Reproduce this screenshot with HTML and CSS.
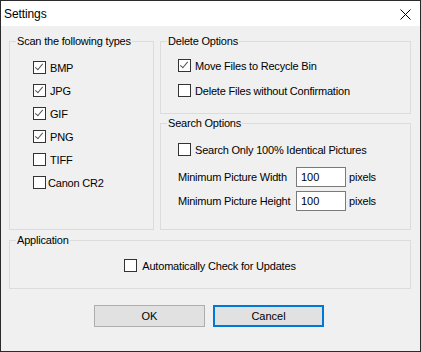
FILE: index.html
```html
<!DOCTYPE html>
<html>
<head>
<meta charset="utf-8">
<link rel="stylesheet" href="styles.css">
</head>
<body>
<div class="window">
  <div class="titlebar">
    <span class="title">Settings</span>
    <svg class="close" width="11" height="11" viewBox="0 0 11 11"><path d="M0.5 0.5 L10.5 10.5 M10.5 0.5 L0.5 10.5" stroke="#000" stroke-width="1" fill="none"/></svg>
  </div>
  <div class="content">
    <div class="top">
      <fieldset class="group types">
        <legend>Scan the following types</legend>
        <div class="inner">
          <div class="row"><span class="cb on"></span><span class="lbl">BMP</span></div>
          <div class="row"><span class="cb on"></span><span class="lbl">JPG</span></div>
          <div class="row"><span class="cb on"></span><span class="lbl">GIF</span></div>
          <div class="row"><span class="cb on"></span><span class="lbl">PNG</span></div>
          <div class="row"><span class="cb"></span><span class="lbl">TIFF</span></div>
          <div class="row tight"><span class="cb"></span><span class="lbl">Canon CR2</span></div>
        </div>
      </fieldset>
      <div class="rightcol">
        <fieldset class="group del">
          <legend>Delete Options</legend>
          <div class="inner">
            <div class="row r25"><span class="cb on"></span><span class="lbl">Move Files to Recycle Bin</span></div>
            <div class="row r25"><span class="cb"></span><span class="lbl">Delete Files without Confirmation</span></div>
          </div>
        </fieldset>
        <fieldset class="group search">
          <legend>Search Options</legend>
          <div class="inner">
            <div class="row"><span class="cb"></span><span class="lbl">Search Only 100% Identical Pictures</span></div>
            <div class="field first"><span class="flabel">Minimum Picture Width</span><span class="input">100</span><span class="unit">pixels</span></div>
            <div class="field"><span class="flabel">Minimum Picture Height</span><span class="input">100</span><span class="unit">pixels</span></div>
          </div>
        </fieldset>
      </div>
    </div>
    <fieldset class="group app">
      <legend>Application</legend>
      <div class="inner">
        <div class="row center"><span class="cb"></span><span class="lbl">Automatically Check for Updates</span></div>
      </div>
    </fieldset>
    <div class="buttons">
      <div class="btn">OK</div>
      <div class="btn default">Cancel</div>
    </div>
  </div>
</div>
</body>
</html>
```
FILE: styles.css
```css
html, body {
  margin: 0;
  padding: 0;
  background: #f0f0f0;
}
.window {
  width: 421px;
  height: 352px;
  box-sizing: border-box;
  border: 1px solid #2b2b2b;
  background: #f0f0f0;
  font-family: "Liberation Sans", Arial, sans-serif;
  font-size: 11px;
  color: #000;
  display: flex;
  flex-direction: column;
}
.titlebar {
  height: 25px;
  background: #fff;
  display: flex;
  align-items: center;
  justify-content: space-between;
  padding: 0 9px 0 3px;
  flex: none;
}
.title {
  font-size: 12px;
  letter-spacing: -0.1px;
}
.close {
  display: block;
  margin-top: 2px;
}
.content {
  padding: 9px 9px 0 8px;
  display: flex;
  flex-direction: column;
}
.top {
  display: flex;
  gap: 6px;
}
.group {
  margin: 0;
  padding: 0;
  border: 1px solid #dcdcdc;
  min-width: 0;
  box-sizing: border-box;
}
.group legend {
  padding: 0 1px;
  margin-left: 6px;
  line-height: 13px;
  letter-spacing: -0.2px;
  white-space: nowrap;
}
.types {
  width: 145px;
  height: 195px;
}
.types .inner {
  padding: 8px 0 0 23px;
}
.rightcol {
  width: 251px;
  display: flex;
  flex-direction: column;
  gap: 3px;
}
.del {
  height: 79px;
}
.del .inner {
  padding: 5px 0 0 17px;
}
.search {
  height: 113px;
}
.search .inner {
  padding: 8px 0 0 17px;
}
.row {
  height: 23px;
  display: flex;
  align-items: center;
  gap: 4px;
}
.row.r25 {
  height: 25px;
}
.row.tight {
  gap: 2px;
}
.lbl {
  letter-spacing: -0.2px;
  padding-top: 1px;
}
.cb {
  width: 13px;
  height: 13px;
  box-sizing: border-box;
  border: 1px solid #333;
  background: #fff;
  flex: none;
  position: relative;
}
.cb.on::after {
  content: "";
  position: absolute;
  left: 3px;
  top: 0px;
  width: 3px;
  height: 7px;
  border-right: 1.3px solid #555;
  border-bottom: 1.3px solid #555;
  transform: rotate(40deg);
}
.field {
  display: flex;
  align-items: center;
  height: 20px;
  margin-top: 4px;
}
.field.first {
  margin-top: 6px;
}
.flabel {
  width: 118px;
  letter-spacing: -0.2px;
}
.input {
  width: 50px;
  height: 20px;
  box-sizing: border-box;
  border: 1px solid #7a7a7a;
  background: #fff;
  padding: 3px 0 0 4px;
  line-height: 13px;
}
.unit {
  margin-left: 3px;
  letter-spacing: -0.2px;
}
.app {
  margin-top: 4px;
  height: 55px;
}
.app .inner {
  padding-top: 7px;
}
.row.center {
  justify-content: center;
  gap: 5px;
}
.buttons {
  display: flex;
  gap: 8px;
  margin-top: 16px;
  padding-left: 85px;
}
.btn {
  width: 111px;
  height: 22px;
  box-sizing: border-box;
  border: 1px solid #adadad;
  background: #e1e1e1;
  display: flex;
  align-items: center;
  justify-content: center;
  font-size: 11px;
}
.btn.default {
  border: 2px solid #0078d7;
}
```
